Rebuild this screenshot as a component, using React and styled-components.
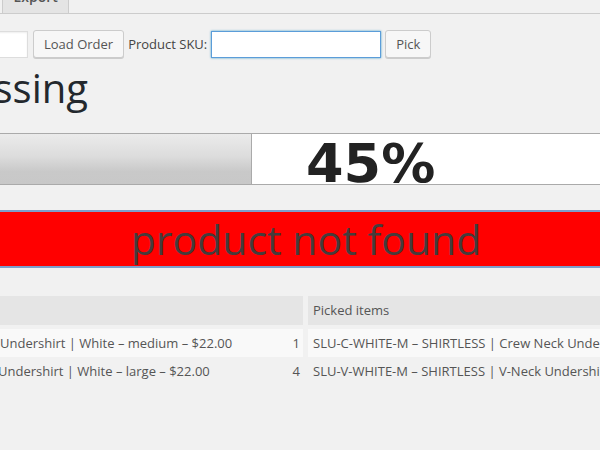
import React from 'react'
import styled, { createGlobalStyle } from 'styled-components'

const GlobalStyle = createGlobalStyle`
  html, body {
    margin: 0;
    padding: 0;
    background: #f1f1f1;
  }

  body {
    font-family: "Open Sans", "Liberation Sans", sans-serif;
    font-size: 13px;
    color: #444;
  }
`

const PageStyled = styled.div`
  width: 600px;
  height: 450px;
  overflow: hidden;
  background: #f1f1f1;
`

const TabBarStyled = styled.div`
  height: 13px;
  border-bottom: 1px solid #ccc;

  display: flex;
  flex-direction: row;
  align-items: flex-end;
  gap: 4px;
  overflow: hidden;
`

const TabStyled = styled.div`
  flex: none;
  height: 34px;
  box-sizing: border-box;
  padding: 5px 10px;
  margin-left: ${p => p.$offset || 0}px;

  border: 1px solid #ccc;
  border-bottom: none;
  background: ${p => (p.$active ? '#f1f1f1' : '#e4e4e4')};

  font-size: 14px;
  font-weight: 600;
  line-height: 24px;
  color: #555;
`

const ToolbarStyled = styled.div`
  margin-top: 16px;
  height: 28px;

  display: flex;
  flex-direction: row;
  align-items: center;
  gap: 4px;
`

const InputStyled = styled.input`
  flex: none;
  width: ${p => p.$width}px;
  height: 27px;
  margin: 1px 0 0 ${p => p.$offset || 0}px;
  box-sizing: border-box;
  padding: 3px 5px;

  border: 1px solid ${p => (p.$focus ? '#5b9dd9' : '#ddd')};
  box-shadow: ${p => (p.$focus ? '0 0 2px rgba(30, 140, 190, .8)' : 'inset 0 1px 2px rgba(0, 0, 0, .07)')};
  background: #fff;
  outline: none;
  font-family: inherit;
  font-size: 14px;
`

const ButtonStyled = styled.button`
  flex: none;
  height: 28px;
  margin-left: ${p => p.$offset || 0}px;
  padding: 0 10px 1px;

  border: 1px solid #ccc;
  border-radius: 3px;
  background: #f7f7f7;
  box-shadow: 0 1px 0 #ccc;

  font-family: inherit;
  font-size: 13px;
  line-height: 26px;
  color: #555;
`

const LabelStyled = styled.label`
  flex: none;
  font-size: 13px;
  color: #444;
`

const HeadingStyled = styled.h1`
  width: 88px;
  margin: 6px 0 0;

  display: flex;
  justify-content: flex-end;
  white-space: nowrap;

  font-size: 40px;
  font-weight: 400;
  line-height: 48px;
  color: #23282d;
`

const ProgressStyled = styled.div`
  margin-top: 21px;
  width: 640px;
  height: 50px;
  border-top: 1px solid #aaa;
  border-bottom: 1px solid #aaa;
  background: #fff;

  display: flex;
  flex-direction: row;
`

const ProgressFillStyled = styled.div`
  flex: none;
  box-sizing: border-box;
  border-right: 1px solid #aaa;
  background: linear-gradient(to bottom, #ebebeb 0%, #dcdcdc 45%, #c9c9c9 75%, #c8c8c8 100%);
`

const ProgressLabelStyled = styled.div`
  padding: 10px 0 0 54px;
  font-family: "DejaVu Sans", "Liberation Sans", sans-serif;
  font-size: 54px;
  font-weight: 700;
  line-height: 40px;
  color: #222;
`

const AlertStyled = styled.div`
  margin-top: 25px;
  width: 612px;
  height: 54px;
  border-top: 2px solid #7d9ecb;
  border-bottom: 2px solid #7d9ecb;
  background: #ff0000;

  text-align: center;
  font-size: 41px;
  font-weight: 500;
  line-height: 54px;
  color: #443c3c;
`

const TableStyled = styled.div`
  margin-top: 28px;
  width: 900px;

  display: grid;
  grid-template-columns: 303px 1fr;
  column-gap: 5px;
  font-size: 13px;
  color: #555;
`

const HeadCellStyled = styled.div`
  height: 29px;
  margin-bottom: 4px;
  padding: 0 5px;
  background: #e5e5e5;
  line-height: 29px;
  color: #555;
`

const CellStyled = styled.div`
  height: 28px;
  padding: 0 5px;
  background: ${p => (p.$striped ? '#f9f9f9' : 'transparent')};

  display: flex;
  flex-direction: row;
  align-items: center;
  white-space: nowrap;
  overflow: hidden;
`

const NameCellStyled = styled(CellStyled)`
  padding: 0 3px 0 0;
  justify-content: space-between;

  & > span:first-child {
    margin-left: ${p => p.$shift || 0}px;
  }
`

const rows = [
  { name: 'Undershirt | White – medium – $22.00', qty: 1, picked: 'SLU-C-WHITE-M – SHIRTLESS | Crew Neck Undershirt | White – medium', shift: 0 },
  { name: 'Undershirt | White – large – $22.00', qty: 4, picked: 'SLU-V-WHITE-M – SHIRTLESS | V-Neck Undershirt | White – medium', shift: -2 },
]

export default () => (
  <PageStyled>
    <GlobalStyle />
    <TabBarStyled>
      <TabStyled $active $offset={-70}>Import</TabStyled>
      <TabStyled>Export</TabStyled>
    </TabBarStyled>

    <ToolbarStyled>
      <InputStyled $width={40} $offset={-12} />
      <ButtonStyled $offset={1}>Load Order</ButtonStyled>
      <LabelStyled>Product SKU:</LabelStyled>
      <InputStyled $width={170} $focus />
      <ButtonStyled>Pick</ButtonStyled>
    </ToolbarStyled>

    <HeadingStyled>Order Processing</HeadingStyled>

    <ProgressStyled>
      <ProgressFillStyled style={{ width: 252 }} />
      <ProgressLabelStyled>45%</ProgressLabelStyled>
    </ProgressStyled>

    <AlertStyled>product not found</AlertStyled>

    <TableStyled>
      <HeadCellStyled />
      <HeadCellStyled>Picked items</HeadCellStyled>
      {rows.map((row, i) => (
        <React.Fragment key={i}>
          <NameCellStyled $striped={i % 2 === 0} $shift={row.shift}>
            <span>{row.name}</span>
            <span>{row.qty}</span>
          </NameCellStyled>
          <CellStyled $striped={i % 2 === 0}>{row.picked}</CellStyled>
        </React.Fragment>
      ))}
    </TableStyled>
  </PageStyled>
)
